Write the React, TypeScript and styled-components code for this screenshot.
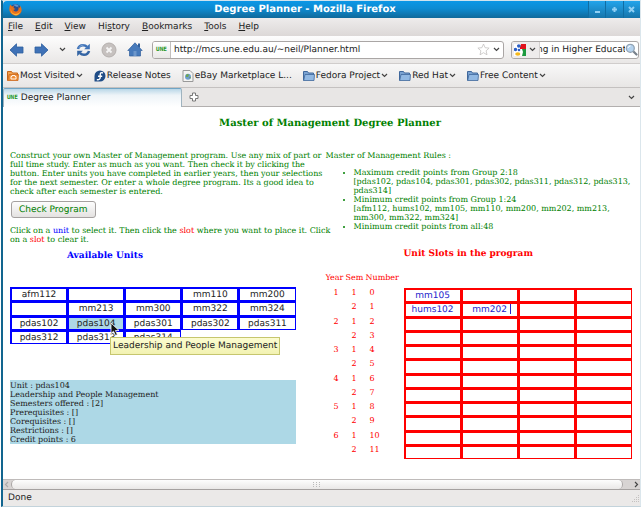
import React from "react";
import styled, { createGlobalStyle, css } from "styled-components";

const SANS = `"DejaVu Sans", Verdana, sans-serif`;
const SERIF = `"DejaVu Serif", Georgia, serif`;

const GlobalStyle = createGlobalStyle`
  * { box-sizing: border-box; }
  body { margin: 0; background: #fff; text-rendering: geometricPrecision; }
  button, input { font: inherit; color: inherit; margin: 0; padding: 0; border: 0; background: none; text-rendering: inherit; }
`;

const Frame = styled.div`
  display: flex;
  flex-direction: column;
  min-height: 100vh;
  margin: 0 1px;
  border-top: 1px solid #cfe3ee;
  border-left: 2px solid #12658f;
  border-right: 1px solid #dbe6ec;
  border-bottom: 1px solid #c3d3db;
  font: 9px/12px ${SANS};
  color: #222;
  background: #ebe9e8;
`;

const TitleBar = styled.header`
  display: grid;
  grid-template-columns: 13px 1fr 52px;
  align-items: center;
  height: 17px;
  padding-left: 6px;
  border-radius: 4px 4px 0 0;
  background: linear-gradient(#0b97e6, #0d8bd2 45%, #10699a);
  color: #fff;
`;

const WindowTitle = styled.h1`
  margin: 0;
  text-align: center;
  font-size: 10px;
  line-height: 12px;
  white-space: nowrap;
`;

const WindowButtons = styled.div`
  display: flex;
  align-self: stretch;
`;

const WindowButton = styled.button`
  display: grid;
  place-items: center;
  flex: 1;
  background: linear-gradient(#22a4eb, #1775aa);
  border-left: 1px solid #0f6da3;
  color: #8fd0f5;
`;

const MenuBar = styled.nav`
  display: flex;
  align-items: center;
  gap: 12px;
  height: 18px;
  padding: 0 5px;
  background: linear-gradient(#eeecec, #dcd8d7);
`;

const MenuButton = styled.button`
  text-underline-offset: 1px;
`;

const NavBar = styled.div`
  display: flex;
  align-items: center;
  height: 28px;
  padding: 0 1px 0 6px;
  border-bottom: 1px solid #d0cdcc;
  background: linear-gradient(#fdfdfd, #e9e7e6);
`;

const NavButtons = styled.div`
  display: flex;
  align-items: center;
  gap: 10px;
  margin-right: 9px;
`;

const IconButton = styled.button`
  display: grid;
  place-items: center;
  flex: none;
`;

const Field = styled.div`
  display: flex;
  align-items: center;
  height: 18px;
  border: 1px solid #aaa6a5;
  border-radius: 3px;
  background: #fff;
  overflow: hidden;
`;

const AddressField = styled(Field)`
  flex: 1;
  min-width: 0;
  gap: 3px;
  margin-right: 7px;
  padding-right: 3px;
`;

const SearchField = styled(Field)`
  flex: 0 0 128px;
`;

const Identity = styled.span`
  display: grid;
  place-items: center;
  width: 18px;
  height: 16px;
  border-right: 1px solid #c2bfbe;
  background: linear-gradient(#fff, #e9e7e6);
`;

const EngineButton = styled.button`
  display: flex;
  align-items: center;
  gap: 3px;
  width: 28px;
  height: 16px;
  padding-left: 2px;
  border-right: 1px solid #d4d1d0;
  background: #eeecec;
`;

const TextInput = styled.input<{ $shift?: boolean }>`
  flex: 1;
  min-width: 0;
  outline: 0;
  text-indent: ${(p) => (p.$shift ? "-3px" : "0")};
`;

const SiteMark = styled.span`
  color: #219221;
  font: bold 6px/8px "DejaVu Sans Mono", monospace;
`;

const BookmarksBar = styled.nav`
  display: flex;
  align-items: center;
  gap: 11px;
  height: 24px;
  padding: 0 4px;
  border-bottom: 1px solid #c4c1c0;
  background: linear-gradient(#f8f8f8, #e8e6e5);
`;

const Bookmark = styled.a`
  display: flex;
  align-items: center;
  gap: 1px;
  color: inherit;
  text-decoration: none;
  white-space: nowrap;
`;

const TabStrip = styled.div`
  display: flex;
  align-items: center;
  height: 19px;
  border-bottom: 1px solid #b2afae;
  background: #e8e6e5;
`;

const Tab = styled.button`
  display: flex;
  align-items: center;
  gap: 3px;
  width: 179px;
  height: 19px;
  padding-left: 3px;
  border: 1px solid #9fb3bf;
  border-top-color: #70a5c5;
  border-bottom: 0;
  border-radius: 2px 2px 0 0;
  background: linear-gradient(#b9d7e8, #eef4f8 35%, #fff);
`;

const StripButton = styled(IconButton)<{ $end?: boolean }>`
  margin: ${(p) => (p.$end ? "0 5px 0 auto" : "0 7px")};
`;

const Page = styled.main`
  flex: 1;
  padding: 10px 8px 0 7px;
  background: #fff;
  color: #008000;
  font: 8px/9px ${SERIF};
`;

const PageTitle = styled.h2`
  margin: 0 0 20px;
  padding-left: 18px;
  text-align: center;
  font-size: 10px;
  line-height: 14px;
`;

const Columns = styled.div`
  display: grid;
  grid-template-columns: minmax(0, 303fr) minmax(0, 307fr);
  column-gap: 13px;
`;

const Paragraph = styled.p`
  margin: 0;
`;

const Instructions = styled(Paragraph)<{ $after?: number }>`
  margin-bottom: ${(p) => p.$after ?? 0}px;
  white-space: nowrap;
`;

const CheckButton = styled.button`
  display: block;
  height: 17px;
  margin: 5px 0 8px 1px;
  padding: 0 7px;
  border: 1px solid #a5a1a0;
  border-radius: 3px;
  background: linear-gradient(#fdfdfd, #e4e2e1);
  font: 9px/12px ${SANS};
`;

const Tint = styled.span<{ $color: string }>`
  color: ${(p) => p.$color};
`;

const SectionTitle = styled.h3<{ $color: string; $indent: number }>`
  margin: 0;
  padding-left: ${(p) => p.$indent}px;
  color: ${(p) => p.$color};
  font-size: 9px;
  line-height: 12px;
`;

const gridTable = css`
  border-spacing: 0;
  table-layout: fixed;
`;

const UnitTable = styled.table`
  ${gridTable}
  width: calc(100% - 17px);
  height: 57px;
  margin: 25px 0 36px;
`;

const UnitCell = styled.td<{ $outlined: boolean; $selected: boolean }>`
  position: relative;
  padding: 0;
  border: solid ${(p) => (p.$outlined ? "#00f" : "transparent")};
  border-width: 2px 1px 1px 2px;
  background: ${(p) => (p.$selected ? "#add8e6" : "none")};
`;

const UnitButton = styled.button`
  display: block;
  width: 100%;
  height: 11px;
  padding-top: 1px;
  color: #222;
  font: 9px/11px ${SANS};
`;

const Pointer = styled.svg`
  position: absolute;
  z-index: 2;
  left: 41px;
  top: 4px;
`;

const Tooltip = styled.div`
  position: absolute;
  z-index: 1;
  left: 41px;
  top: 19px;
  padding: 1px 2px;
  border: 1px solid #c6c66e;
  background: linear-gradient(#fcfcd0, #f2f2b2);
  color: #222;
  font: 9px/14px ${SANS};
  white-space: nowrap;
`;

const UnitDetails = styled.section`
  margin-right: 17px;
  padding-top: 1px;
  background: #add8e6;
  color: #222;
`;

const Rules = styled.ul`
  margin: 8px 0 17px;
  padding-left: 28px;
`;

const SlotTable = styled.table`
  ${gridTable}
  width: 100%;
  margin-top: 13px;
  color: #f00;

  th {
    padding: 0;
    font-weight: normal;
    text-align: left;
    vertical-align: top;
    white-space: nowrap;
  }
  thead th {
    height: 15px;
  }
  tbody {
    height: 171px;
  }
`;

const RowLabel = styled.th<{ $indent: number }>`
  && {
    padding-left: ${(p) => p.$indent}px;
  }
`;

const SlotCell = styled.td`
  padding: 0;
  border: solid #f00;
  border-width: 2px 1px 1px 2px;
`;

const SlotInput = styled.input<{ $caret: boolean }>`
  display: block;
  width: 100%;
  height: 11px;
  padding-top: 1px;
  outline: 0;
  color: #22c;
  text-align: center;
  font: 9px/10px ${SANS};
  background: ${(p) => (p.$caret ? "linear-gradient(#22c, #22c) no-repeat right 6px top / 1px 10px" : "none")};
`;

const ScrollRow = styled.div`
  display: flex;
  align-items: center;
  height: 11px;
  border-top: 1px solid #bfbbba;
  border-bottom: 1px solid #a5a1a0;
  background: #d8d4d3;
`;

const ScrollThumb = styled.div`
  display: grid;
  place-items: center;
  flex: 1;
  height: 9px;
  margin: 0 10px 0 1px;
  border: solid #aaa6a5;
  border-width: 0 1px;
  border-radius: 5px;
  background: linear-gradient(#fdfdfd, #eae8e7);
`;

const StatusBar = styled.footer`
  display: flex;
  align-items: center;
  justify-content: space-between;
  height: 16px;
  padding-left: 5px;
`;

const Chevron = ({ d = "M1 2l2.5 2.5L6 2", color = "#444" }: { d?: string; color?: string }) => (
  <svg width="7" height="7" viewBox="0 0 7 7" fill="none" stroke={color} strokeWidth="1.2" aria-hidden="true">
    <path d={d} />
  </svg>
);

const FirefoxIcon = () => (
  <svg width="13" height="13" viewBox="0 0 13 13" aria-hidden="true">
    <circle cx="6.5" cy="6.5" r="5.5" fill="#274f91" />
    <path d="M4 2q3-2 6 1L8 4 6 3z" fill="#5f93cf" />
    <path d="M1 1.5l2 2 2-.5-.5 2 2 1-2.2 1q1 2 3.7 1.2Q10 7.500 9.500 4l1.500 1 0-2.500Q14 7 11.500 10.300 9 13.500 5 12.300 0 10.500.3 5.500z" fill="#e8701b" />
    <path d="M2 5q-.7 5 4 6 4 0 5.500-3Q10 13 5.500 12 .5 10 2 5z" fill="#f9b93b" />
  </svg>
);

const Arrow = ({ flip }: { flip?: boolean }) => (
  <svg width="15" height="14" viewBox="0 0 15 14" aria-hidden="true">
    <path
      d={flip ? "M14 7L7.500.8V4H1v6h6.500v3.200z" : "M1 7L7.500.8V4H14v6H7.500v3.200z"}
      fill="#3f72b7"
      stroke="#2f5f9f"
      strokeWidth=".8"
    />
  </svg>
);

const ReloadIcon = () => (
  <svg width="15" height="14" viewBox="0 0 15 14" aria-hidden="true">
    <path d="M2 6Q3 2.200 7 2.200q2.500 0 4 1.600" fill="none" stroke="#3f72b7" strokeWidth="2.600" />
    <path d="M13.800.8V6.200H8.200z" fill="#3f72b7" />
    <path d="M13 8q-1 3.800-5 3.800-2.500 0-4-1.600" fill="none" stroke="#3465a4" strokeWidth="2.600" />
    <path d="M1.200 13.200V7.800H6.800z" fill="#3465a4" />
    <path d="M2.800 5Q4 2 7.500 2" fill="none" stroke="#8fb3de" strokeWidth=".7" />
  </svg>
);

const StopIcon = () => (
  <svg width="16" height="16" viewBox="0 0 16 16" aria-hidden="true">
    <circle cx="8" cy="8" r="7" fill="#c6c1bf" stroke="#b5b0ae" />
    <path d="M5.500 5.500l5 5m0-5l-5 5" stroke="#f5f4f4" strokeWidth="1.800" />
  </svg>
);

const HomeIcon = () => (
  <svg width="16" height="15" viewBox="0 0 16 15" aria-hidden="true">
    <path d="M11 1.500h2v4h-2z" fill="#315f9c" />
    <path d="M8 .8L.8 8.500H2.500V14h11V8.500h1.700z" fill="#477abb" stroke="#315f9c" strokeWidth=".7" />
    <path d="M6.500 9h3v5h-3z" fill="#6d97cb" />
  </svg>
);

const StarIcon = () => (
  <svg width="13" height="13" viewBox="0 0 13 13" aria-hidden="true">
    <path d="M6.500 1l1.600 3.700 4 .4-3 2.700.9 4-3.500-2.100L3 11.800l.9-4-3-2.700 4-.4z" fill="#fff" stroke="#c4c1c0" strokeWidth=".8" />
  </svg>
);

const GoogleIcon = () => (
  <svg width="12" height="12" viewBox="0 0 12 12" aria-hidden="true">
    <path fill="#fff" d="M0 0h12v12H0z" />
    <path fill="#e1121b" d="M7 0h5v5H6V3z" />
    <path fill="#1c9a3f" d="M8 5h4v7H8l1-4z" />
    <circle cx="4.800" cy="2" r="1.800" fill="#2b5fc7" />
    <circle cx="1.500" cy="5.500" r="1.700" fill="#2b5fc7" />
    <circle cx="5" cy="6" r="1.300" fill="#2b5fc7" />
    <ellipse cx="3.800" cy="10" rx="2.600" ry="1.800" fill="#f5b81c" />
  </svg>
);

const SearchIcon = () => (
  <svg width="13" height="13" viewBox="0 0 13 13" aria-hidden="true">
    <path d="M8 8l3.500 3.500" stroke="#77808a" strokeWidth="2.200" strokeLinecap="round" />
    <circle cx="5.300" cy="5.300" r="4" fill="#b5d3ef" stroke="#93a3b3" strokeWidth="1.300" />
    <path d="M3 5q.3-2 2.500-2" fill="none" stroke="#fff" />
  </svg>
);

const FolderIcon = ({ orange }: { orange?: boolean }) => (
  <svg width="12" height="12" viewBox="0 0 12 12" aria-hidden="true">
    <path d="M.5 10.500V1.500h4l1 1.500h5v2" fill={orange ? "#f2a14f" : "#7ba3d2"} stroke={orange ? "#c7651a" : "#40689c"} />
    <path d="M.7 10.500L2 4.500h9.500L11 10.500z" fill={orange ? "#ee8c36" : "#91b8e3"} stroke={orange ? "#cb6a20" : "#40689c"} strokeWidth=".8" />
    {orange && <path d="M5 5.500h3v1h1v2.500H4V6.500h1z" fill="none" stroke="#fff" strokeWidth=".9" />}
  </svg>
);

const FedoraIcon = () => (
  <svg width="12" height="12" viewBox="0 0 12 12" aria-hidden="true">
    <path d="M6 .5A5.500 5.500 0 0 1 6 11.500H.5V6A5.500 5.500 0 0 1 6 .5z" fill="#204d87" />
    <path d="M9 3Q6.200 1.800 6.200 5v2.200q0 3-3.400 2.400M4 6.200h4.200" fill="none" stroke="#fff" strokeWidth="1.400" />
  </svg>
);

const PageIcon = () => (
  <svg width="12" height="12" viewBox="0 0 12 12" aria-hidden="true">
    <path d="M1 .5h7l3 3v8H1z" fill="#f4f4f2" stroke="#999" />
    <circle cx="6" cy="6.800" r="3" fill="#6c9dce" />
    <path d="M4 5q2-2 3 0l-1 2-2 0zM7 7l2 0-1 2z" fill="#6fa653" />
  </svg>
);

const menus: [string, string, string][] = [
  ["", "F", "ile"],
  ["", "E", "dit"],
  ["", "V", "iew"],
  ["Hi", "s", "tory"],
  ["", "B", "ookmarks"],
  ["", "T", "ools"],
  ["", "H", "elp"],
];

const bookmarks = [
  { label: "Most Visited", icon: <FolderIcon orange />, folder: true },
  { label: "Release Notes", icon: <FedoraIcon />, folder: false },
  { label: "eBay Marketplace L...", icon: <PageIcon />, folder: false },
  { label: "Fedora Project", icon: <FolderIcon />, folder: true },
  { label: "Red Hat", icon: <FolderIcon />, folder: true },
  { label: "Free Content", icon: <FolderIcon />, folder: true },
];

const units: (string | null)[][] = [
  ["afm112", "", "", "mm110", "mm200"],
  ["", "mm213", "mm300", "mm322", "mm324"],
  ["pdas102", "pdas104", "pdas301", "pdas302", "pdas311"],
  ["pdas312", "pdas313", "pdas314", null, null],
];

const details = [
  "Unit : pdas104",
  "Leadership and People Management",
  "Semesters offered : [2]",
  "Prerequisites : []",
  "Corequisites : []",
  "Restrictions : []",
  "Credit points : 6",
];

const rules = [
  ["Maximum credit points from Group 2:18", "[pdas102, pdas104, pdas301, pdas302, pdas311, pdas312, pdas313, pdas314]"],
  ["Minimum credit points from Group 1:24", "[afm112, hums102, mm105, mm110, mm200, mm202, mm213, mm300, mm322, mm324]"],
  ["Minimum credit points from all:48"],
];

const placed: Record<string, string> = { "0-0": "mm105", "1-0": "hums102", "1-1": "mm202" };

export default function App() {
  return (
    <Frame>
      <GlobalStyle />
      <TitleBar>
        <FirefoxIcon />
        <WindowTitle>Degree Planner - Mozilla Firefox</WindowTitle>
        <WindowButtons>
          {[
            ["Minimize", "M1 6h5"],
            ["Maximize", "M3.500 1v5M1 3.500h5"],
            ["Close", "M1 1l5 5M6 1L1 6"],
          ].map(([name, d]) => (
            <WindowButton key={name} aria-label={name}>
              <svg width="7" height="7" viewBox="0 0 7 7" stroke="currentColor" strokeWidth="2">
                <path d={d} />
              </svg>
            </WindowButton>
          ))}
        </WindowButtons>
      </TitleBar>

      <MenuBar>
        {menus.map(([before, key, after]) => (
          <MenuButton key={key + after}>
            {before}
            <u>{key}</u>
            {after}
          </MenuButton>
        ))}
      </MenuBar>

      <NavBar>
        <NavButtons>
          <IconButton aria-label="Back"><Arrow /></IconButton>
          <IconButton aria-label="Forward"><Arrow flip /></IconButton>
          <IconButton aria-label="Recent pages"><Chevron /></IconButton>
          <IconButton aria-label="Reload"><ReloadIcon /></IconButton>
          <IconButton aria-label="Stop"><StopIcon /></IconButton>
          <IconButton aria-label="Home"><HomeIcon /></IconButton>
        </NavButtons>
        <AddressField>
          <Identity><SiteMark>UNE</SiteMark></Identity>
          <TextInput aria-label="Address" defaultValue="http://mcs.une.edu.au/~neil/Planner.html" />
          <IconButton aria-label="Bookmark this page"><StarIcon /></IconButton>
          <IconButton aria-label="Address history"><Chevron /></IconButton>
        </AddressField>
        <SearchField>
          <EngineButton aria-label="Search engine">
            <GoogleIcon />
            <Chevron />
          </EngineButton>
          <TextInput $shift aria-label="Search" defaultValue="ng in Higher Educat" />
          <IconButton aria-label="Search the web"><SearchIcon /></IconButton>
        </SearchField>
      </NavBar>

      <BookmarksBar>
        {bookmarks.map((b) => (
          <Bookmark key={b.label} href="#">
            {b.icon}
            <span>{b.label}</span>
            {b.folder && <Chevron />}
          </Bookmark>
        ))}
      </BookmarksBar>

      <TabStrip>
        <Tab>
          <SiteMark>UNE</SiteMark>
          Degree Planner
        </Tab>
        <StripButton aria-label="New tab">
          <svg width="10" height="10" viewBox="0 0 10 10" fill="#fff" stroke="#777">
            <path d="M3.500 1h3v2.500H9v3H6.500V9h-3V6.500H1v-3h2.500z" />
          </svg>
        </StripButton>
        <StripButton $end aria-label="List all tabs"><Chevron /></StripButton>
      </TabStrip>

      <Page>
        <PageTitle>Master of Management Degree Planner</PageTitle>
        <Columns>
          <div>
            <Instructions>
              Construct your own Master of Management program. Use any mix of part or
              <br />
              full time study. Enter as much as you want. Then check it by clicking the
              <br />
              button. Enter units you have completed in earlier years, then your selections
              <br />
              for the next semester. Or enter a whole degree program. Its a good idea to
              <br />
              check after each semester is entered.
            </Instructions>
            <CheckButton>Check Program</CheckButton>
            <Instructions $after={6}>
              Click on a <Tint $color="#00f">unit</Tint> to select it. Then click the <Tint $color="#f00">slot</Tint>{" "}
              where you want to place it. Click
              <br />
              on a <Tint $color="#f00">slot</Tint> to clear it.
            </Instructions>
            <SectionTitle $color="#00f" $indent={57}>Available Units</SectionTitle>
            <UnitTable>
              <tbody>
                {units.map((row, r) => (
                  <tr key={r}>
                    {row.map((unit, c) => (
                      <UnitCell key={c} $outlined={unit !== null} $selected={unit === "pdas104"}>
                        {unit && <UnitButton>{unit}</UnitButton>}
                        {unit === "pdas104" && (
                          <>
                            <Tooltip role="tooltip">Leadership and People Management</Tooltip>
                            <Pointer width="10" height="15" viewBox="0 0 10 15" aria-hidden="true">
                              <path d="M1 1v10.500l2.500-2.300 2 4.300 1.900-.9-2-4.100H9z" fill="#111" stroke="#fff" strokeWidth=".8" />
                            </Pointer>
                          </>
                        )}
                      </UnitCell>
                    ))}
                  </tr>
                ))}
              </tbody>
            </UnitTable>
            <UnitDetails>
              {details.map((line) => (
                <Paragraph key={line}>{line}</Paragraph>
              ))}
            </UnitDetails>
          </div>

          <div>
            <Paragraph>Master of Management Rules :</Paragraph>
            <Rules>
              {rules.map(([rule, list]) => (
                <li key={rule}>
                  {rule}
                  {list && <Paragraph>{list}</Paragraph>}
                </li>
              ))}
            </Rules>
            <SectionTitle $color="#f00" $indent={78}>Unit Slots in the program</SectionTitle>
            <SlotTable>
              <colgroup>
                <col width="20" />
                <col width="20" />
                <col width="38" />
                <col span={4} />
              </colgroup>
              <thead>
                <tr>
                  <th scope="col">Year</th>
                  <th scope="col">Sem</th>
                  <th scope="col">Number</th>
                  <th colSpan={4} aria-label="Slots" />
                </tr>
              </thead>
              <tbody>
                {Array.from({ length: 12 }, (_, r) => (
                  <tr key={r}>
                    <RowLabel $indent={8}>{r % 2 === 0 ? r / 2 + 1 : ""}</RowLabel>
                    <RowLabel $indent={6}>{(r % 2) + 1}</RowLabel>
                    <RowLabel $indent={4} scope="row">{r}</RowLabel>
                    {[0, 1, 2, 3].map((c) => (
                      <SlotCell key={c}>
                        <SlotInput
                          aria-label={`Semester ${r}, slot ${c + 1}`}
                          defaultValue={placed[`${r}-${c}`] ?? ""}
                          $caret={r === 1 && c === 1}
                        />
                      </SlotCell>
                    ))}
                  </tr>
                ))}
              </tbody>
            </SlotTable>
          </div>
        </Columns>
      </Page>

      <ScrollRow>
        <Chevron d="M5 1L2.500 3.500 5 6" color="#aaa" />
        <ScrollThumb>
          <svg width="9" height="5" viewBox="0 0 9 5" fill="#bbb" aria-hidden="true">
            <path d="M0 0h1v1H0zM3 0h1v1H3zM6 0h1v1H6zM0 2h1v1H0zM3 2h1v1H3zM6 2h1v1H6zM0 4h1v1H0zM3 4h1v1H3zM6 4h1v1H6z" />
          </svg>
        </ScrollThumb>
        <Chevron d="M2 1l2.500 2.500L2 6" />
      </ScrollRow>
      <StatusBar>
        Done
        <svg width="9" height="9" viewBox="0 0 9 9" fill="#c4c1c0" aria-hidden="true">
          <path d="M7 1h1v1H7zM5 3h1v1H5zM7 3h1v1H7zM3 5h1v1H3zM5 5h1v1H5zM7 5h1v1H7zM1 7h1v1H1zM3 7h1v1H3zM5 7h1v1H5zM7 7h1v1H7z" />
        </svg>
      </StatusBar>
    </Frame>
  );
}
